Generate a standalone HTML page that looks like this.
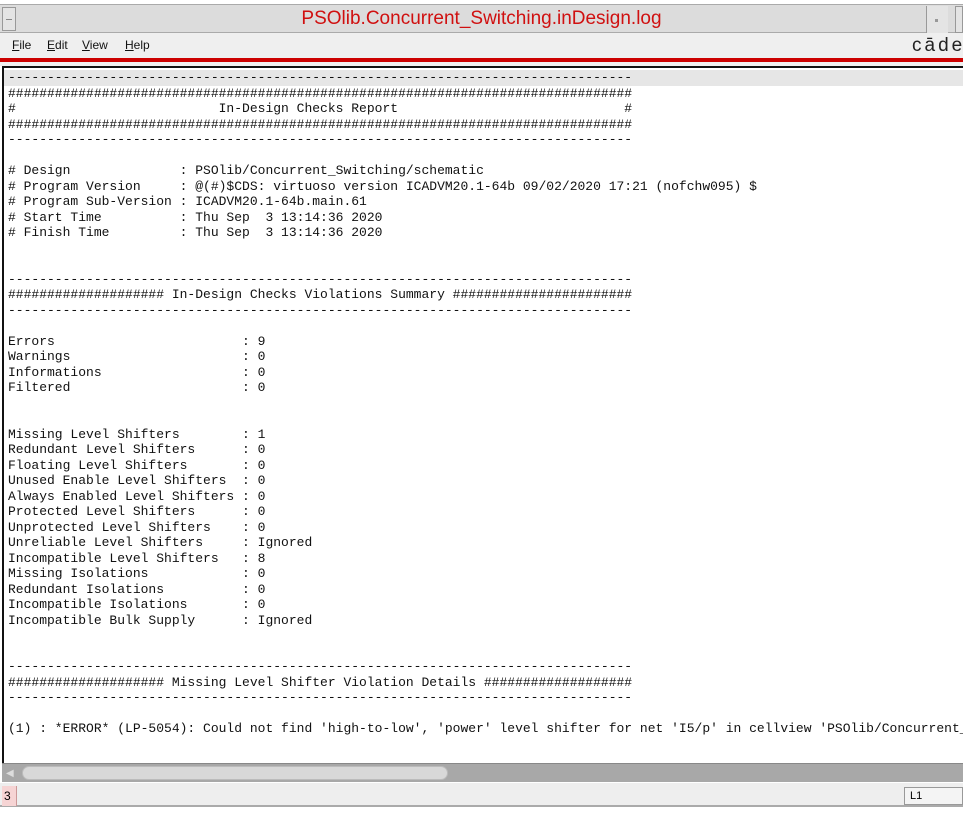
<!DOCTYPE html>
<html><head><meta charset="utf-8"><style>
*{margin:0;padding:0;box-sizing:border-box}
body{width:963px;height:815px;background:#fff;position:relative;overflow:hidden;font-family:"Liberation Sans",sans-serif}
#title{position:absolute;left:0;top:4px;width:963px;height:29px;background:#dcdcdc;border-top:1px solid #aaa;border-bottom:1px solid #aaa}
#title .t{position:absolute;left:0;right:0;top:3px;text-align:center;color:#d01010;font-size:19px}
#title .bl{position:absolute;left:2px;top:2px;width:14px;height:24px;border:1px solid #999;background:#e4e4e4}
#title .bl:after{content:"";position:absolute;left:3px;top:11px;width:6px;height:1px;background:#888}
#title .br{position:absolute;left:926px;top:1px;width:22px;height:27px;border-left:1px solid #999;background:#e4e4e4}
#title .br:after{content:"";position:absolute;left:8px;top:13px;width:3px;height:3px;background:#999}
#title .br2{position:absolute;left:955px;top:1px;width:8px;height:27px;border:1px solid #999;background:#e4e4e4}
#menu{position:absolute;left:0;top:33px;width:963px;height:25px;background:#efefef}
#menu span{position:absolute;top:5px;font-size:12px;color:#111}
#menu .logo{left:912px;top:2px;font-size:19px;letter-spacing:3px;color:#222}
#red{position:absolute;left:0;top:58px;width:963px;height:4px;background:#cc0000}
#gap{position:absolute;left:0;top:62px;width:963px;height:4px;background:#f0f0f0}
#area{position:absolute;left:2px;top:66px;width:961px;height:697px;border-top:2px solid #111;border-left:2px solid #111;background:#fff;overflow:hidden}
#hl{position:absolute;left:0;top:2px;width:961px;height:16px;background:#e6e6e6}
pre{position:absolute;left:4px;top:2px;font-family:"Liberation Mono",monospace;font-size:13px;line-height:15.5px;color:#111;white-space:pre}
#sb{position:absolute;left:2px;top:763px;width:961px;height:19px;background:#a8a8a8;border-top:1px solid #888}
#sb .th{position:absolute;left:20px;top:2px;width:426px;height:14px;background:#d8d8d8;border-radius:7px;border:1px solid #bbb}
#sb .ar{position:absolute;left:4px;top:4px;color:#ddd;font-size:10px}
#status{position:absolute;left:0;top:783px;width:963px;height:24px;background:#eeeeee;border-bottom:2px solid #aaa}
#status .n{position:absolute;left:2px;top:3px;width:15px;height:20px;background:#f6d4d4;font-size:12px;padding:3px 0 0 2px;border-right:1px solid #c99}
#status .l{position:absolute;left:904px;top:4px;width:59px;height:18px;border:1px solid #999;font-size:11px;padding:2px 0 0 5px;background:#f4f4f4}
</style></head><body>
<div id="title"><div class="bl"></div><div class="t">PSOlib.Concurrent_Switching.inDesign.log</div><div class="br"></div><div class="br2"></div></div>
<div id="menu"><span style="left:12px"><u>F</u>ile</span><span style="left:47px"><u>E</u>dit</span><span style="left:82px"><u>V</u>iew</span><span style="left:125px"><u>H</u>elp</span><span class="logo">cāde</span></div>
<div id="red"></div><div id="gap"></div>
<div id="area"><div id="hl"></div><pre>--------------------------------------------------------------------------------
################################################################################
#                          In-Design Checks Report                             #
################################################################################
--------------------------------------------------------------------------------

# Design              : PSOlib/Concurrent_Switching/schematic
# Program Version     : @(#)$CDS: virtuoso version ICADVM20.1-64b 09/02/2020 17:21 (nofchw095) $
# Program Sub-Version : ICADVM20.1-64b.main.61
# Start Time          : Thu Sep  3 13:14:36 2020
# Finish Time         : Thu Sep  3 13:14:36 2020


--------------------------------------------------------------------------------
#################### In-Design Checks Violations Summary #######################
--------------------------------------------------------------------------------

Errors                        : 9
Warnings                      : 0
Informations                  : 0
Filtered                      : 0


Missing Level Shifters        : 1
Redundant Level Shifters      : 0
Floating Level Shifters       : 0
Unused Enable Level Shifters  : 0
Always Enabled Level Shifters : 0
Protected Level Shifters      : 0
Unprotected Level Shifters    : 0
Unreliable Level Shifters     : Ignored
Incompatible Level Shifters   : 8
Missing Isolations            : 0
Redundant Isolations          : 0
Incompatible Isolations       : 0
Incompatible Bulk Supply      : Ignored


--------------------------------------------------------------------------------
#################### Missing Level Shifter Violation Details ###################
--------------------------------------------------------------------------------

(1) : *ERROR* (LP-5054): Could not find 'high-to-low', 'power' level shifter for net 'I5/p' in cellview 'PSOlib/Concurrent_Switching/schematic'</pre></div>
<div id="sb"><span class="ar">◀</span><div class="th"></div></div>
<div id="status"><div class="n">3</div><div class="l">L1</div></div>
</body></html>
